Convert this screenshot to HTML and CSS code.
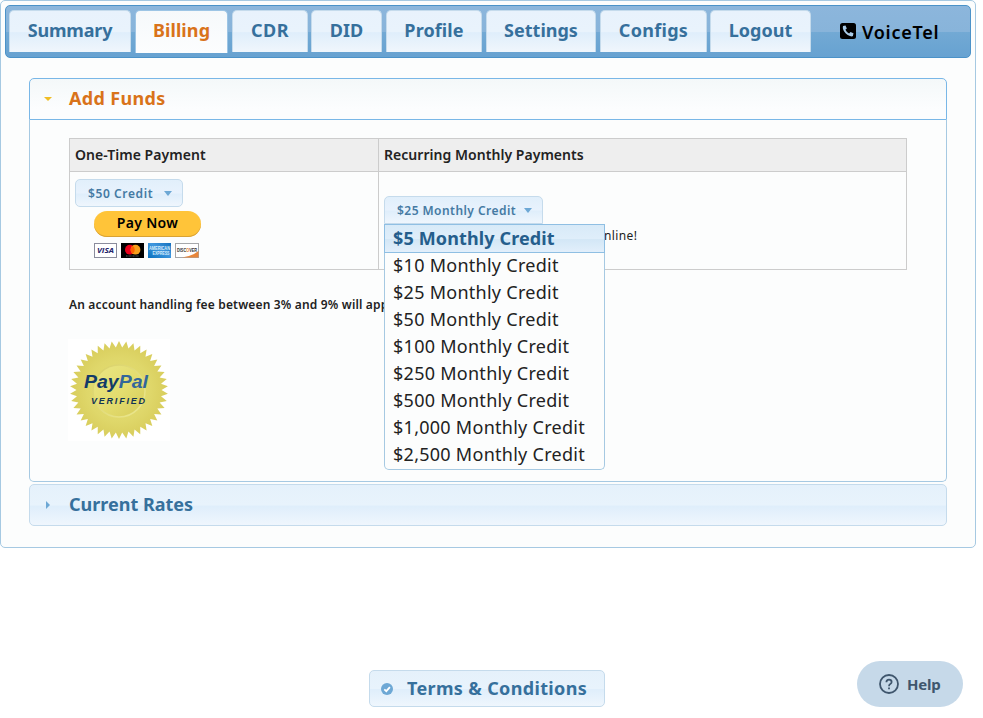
FILE: index.html
```html
<!DOCTYPE html>
<html lang="en">
<head>
<meta charset="utf-8">
<title>VoiceTel - Billing</title>
<link rel="stylesheet" href="styles.css">
</head>
<body>
<div class="tabs">
  <nav class="tab-bar">
    <a class="tab t-summary"><span>Summary</span></a>
    <a class="tab t-billing active"><span>Billing</span></a>
    <a class="tab t-cdr"><span>CDR</span></a>
    <a class="tab t-did"><span>DID</span></a>
    <a class="tab t-profile"><span>Profile</span></a>
    <a class="tab t-settings"><span>Settings</span></a>
    <a class="tab t-configs"><span>Configs</span></a>
    <a class="tab t-logout"><span>Logout</span></a>
    <div class="brand">
      <svg width="16" height="16" viewBox="0 0 16 16"><rect width="16" height="16" rx="2.5" fill="#000"/><path d="M3 3.1 5.5 2.5 6.8 5.5 5.4 6.8Q6.5 9.2 9.1 10.5L10.5 9 13.5 10.3 12.9 13Q11.7 14.2 7.7 12 3.5 9.2 2.8 5Z" fill="#a9cbe7"/></svg>
      <span>VoiceTel</span>
    </div>
  </nav>
  <main class="accordion">
    <h3 class="head open"><i class="caret caret-open"></i><span class="add-funds">Add Funds</span></h3>
    <section class="panel">
      <div class="payments">
        <div class="cell th"><span class="th-one">One-Time Payment</span></div>
        <div class="cell th"><span class="th-rec">Recurring Monthly Payments</span></div>
        <div class="cell one-time">
          <div class="select"><span>$50 Credit</span><i class="arrow"></i></div>
          <div class="pay">
            <button class="pay-now"><span>Pay Now</span></button>
            <div class="cards">
              <svg width="23" height="15" viewBox="0 0 23 15"><rect x=".5" y=".5" width="22" height="14" fill="#fff" stroke="#8a8c9c"/><text x="3" y="10.4" class="visa" textLength="17" lengthAdjust="spacingAndGlyphs">VISA</text></svg>
              <svg width="23" height="15" viewBox="0 0 23 15"><rect width="23" height="15" fill="#000"/><circle cx="8.9" cy="6.7" r="4.9" fill="#eb001b"/><circle cx="14.5" cy="6.7" r="4.9" fill="#f79e1b"/><path d="M11.7 2.7a4.9 4.9 0 0 1 0 8 4.9 4.9 0 0 1 0-8Z" fill="#ff5f00"/><path d="M5 13h13" stroke="#777" stroke-width=".8" stroke-dasharray="1 .4"/></svg>
              <svg width="23" height="15" viewBox="0 0 23 15"><defs><linearGradient id="amex" x1="0" y1="1" x2="1" y2="0"><stop offset="0" stop-color="#0870be"/><stop offset=".55" stop-color="#4097de"/><stop offset="1" stop-color="#1470bd"/></linearGradient></defs><rect width="23" height="15" fill="url(#amex)"/><text x="1" y="6.8" class="amex" textLength="21" lengthAdjust="spacingAndGlyphs">AMERICAN</text><text x="4.5" y="11.8" class="amex" textLength="17" lengthAdjust="spacingAndGlyphs">EXPRESS</text></svg>
              <svg width="24" height="15" viewBox="0 0 24 15"><rect x=".5" y=".5" width="23" height="14" fill="#fff" stroke="#a5a7aa"/><path d="M23.5 8v6.5H7Q17 13.3 23.5 8Z" fill="#e8863a"/><text x="2" y="8.5" class="disc" textLength="20" lengthAdjust="spacingAndGlyphs">DISC<tspan fill="#ee8130">O</tspan>VER</text></svg>
            </div>
          </div>
        </div>
        <div class="cell recurring">
          <div class="select-wrap">
            <div class="select select-open"><span>$25 Monthly Credit</span><i class="arrow"></i></div>
            <ul class="menu">
              <li class="hover"><span>$5 Monthly Credit</span></li>
              <li>$10 Monthly Credit</li>
              <li>$25 Monthly Credit</li>
              <li>$50 Monthly Credit</li>
              <li>$100 Monthly Credit</li>
              <li>$250 Monthly Credit</li>
              <li>$500 Monthly Credit</li>
              <li>$1,000 Monthly Credit</li>
              <li>$2,500 Monthly Credit</li>
            </ul>
          </div>
          <p class="online">nline!</p>
        </div>
      </div>
      <p class="fee">An account handling fee between 3% and 9% will app</p>
      <svg class="seal" width="102" height="102" viewBox="-51 -51 102 102">
        <defs>
          <radialGradient id="gold"><stop offset="0" stop-color="#e6e074"/><stop offset=".65" stop-color="#dfd76a"/><stop offset="1" stop-color="#d8cd5c"/></radialGradient>
          <linearGradient id="disc" x1="0" y1="0" x2="1" y2="1"><stop offset="0" stop-color="#eae684"/><stop offset=".55" stop-color="#e3dc6e"/><stop offset="1" stop-color="#d6cb59"/></linearGradient>
          <linearGradient id="rim" x1="0" y1="0" x2="1" y2="1"><stop offset="0" stop-color="#d8d067"/><stop offset="1" stop-color="#ece890"/></linearGradient>
        </defs>
        <rect x="-51" y="-51" width="102" height="102" fill="#fff"/>
        <polygon id="burst" fill="url(#gold)"/>
        <circle cy="1" r="26" fill="url(#disc)" stroke="url(#rim)" stroke-width="1.5"/>
        <text x="-35" y="-2.5" class="pp" textLength="64" lengthAdjust="spacingAndGlyphs"><tspan fill="#123b68">Pay</tspan><tspan fill="#32669b">Pal</tspan></text>
        <text x="-28" y="14" class="ver" textLength="54">VERIFIED</text>
      </svg>
    </section>
    <h3 class="head closed"><i class="caret caret-closed"></i><span class="rates">Current Rates</span></h3>
  </main>
</div>
<a class="terms">
  <svg width="12" height="12" viewBox="0 0 12 12"><circle cx="6" cy="6" r="6" fill="#6da8d5"/><path d="m3.3 6.4 2 1.8 3.6-4" fill="none" stroke="#fff" stroke-width="1.8"/></svg>
  <span>Terms &amp; Conditions</span>
</a>
<a class="help">
  <svg width="20" height="20" viewBox="0 0 20 20" fill="none" stroke="#3f566d" stroke-width="1.8"><circle cx="10" cy="10" r="9"/><path d="M7.4 8.2Q7.4 5.6 10 5.6T12.6 8Q12.6 9.3 11.3 10 10 10.7 10 12.2"/><path d="M10 13.4v1.9"/></svg>
  <span>Help</span>
</a>
<script src="seal.js"></script>
</body>
</html>
```
FILE: styles.css
```css
* { box-sizing: border-box; }
body { margin: 0; height: 718px; position: relative; overflow: hidden; background: #fff; color: #222; font-family: "Noto Sans", "Open Sans", sans-serif; }
p, h3, ul { margin: 0; padding: 0; }
svg { display: block; flex: none; }
span { white-space: nowrap; }
.tabs { width: 976px; height: 548px; border: 1px solid #a6c9e2; border-radius: 5px; padding: 4px; background: #fcfdfd; }
.tab-bar { display: flex; align-items: flex-start; width: 966px; height: 53px; padding: 4px 3px 0; border: 1px solid #4b92c8; border-radius: 5px; background: linear-gradient(#8cb6dc 0, #88b4da 50%, #72a9d4 52%, #67a2d1 100%); }
.tab { display: flex; justify-content: center; height: 42px; border: 1px solid #c5dbec; border-bottom: 0; border-radius: 5px 5px 0 0; background: linear-gradient(#e8f2fc 0, #e9f3fc 50%, #dfeefb 53%, #f0f6fc 100%); color: #36709c; font-size: 18px; font-weight: 700; line-height: 39px; }
.active { height: 43px; border-color: #9dc5e5; background: linear-gradient(#f6f9fb, #fcfdfe); color: #d9731a; }
.t-summary { width: 122px; margin-right: 4px; letter-spacing: -.2px; }
.t-billing { width: 93px; margin-right: 4px; letter-spacing: .1px; }
.t-cdr { width: 76px; margin-right: 3px; letter-spacing: .5px; }
.t-did { width: 71px; margin-right: 4px; letter-spacing: .1px; }
.t-profile { width: 96px; margin-right: 4px; letter-spacing: .1px; }
.t-settings { width: 110px; margin-right: 4px; }
.t-configs { width: 107px; margin-right: 3px; letter-spacing: .3px; }
.t-logout { width: 101px; }
.brand { display: flex; align-items: center; gap: 6px; height: 42px; margin-left: 29px; color: #000; font-size: 18px; font-weight: 600; letter-spacing: .75px; }
.brand span { margin-top: 1px; }
.accordion { width: 918px; margin: 20px 0 0 24px; }
.head { display: flex; align-items: center; height: 42px; padding-left: 12px; border: 1px solid #c5dbec; border-radius: 5px; font-size: 18px; font-weight: 700; line-height: 38px; }
.head span { padding-bottom: 3px; }
.add-funds { letter-spacing: .35px; }
.open { border-color: #79b7e7; border-radius: 5px 5px 0 0; background: linear-gradient(#f4f8f9, #fcfdfe 75%); color: #d9731a; }
.closed { margin-top: 2px; background: linear-gradient(#e5f1fb 0, #e8f3fc 50%, #dfeefb 53%, #eff6fd 100%); color: #36709c; }
.caret { width: 12px; height: 8px; margin-right: 15px; }
.caret::before { content: ""; display: block; width: 0; height: 0; }
.caret-open::before { margin: 2px 0 0 2px; border: 4px solid transparent; border-top-color: #f0bd24; border-bottom: 0; }
.caret-closed::before { margin-left: 4px; border: 4px solid transparent; border-left-color: #6da8d5; border-right: 0; }
.panel { height: 362px; padding: 18px 39px 0; border: 1px solid #a6c9e2; border-top: 0; border-radius: 0 0 5px 5px; }
.payments { display: grid; grid-template: 33px 98px / 309px 528px; width: 838px; height: 132px; border: 1px solid #ccc; border-width: 1px 0 0 1px; }
.cell { border: 1px solid #ccc; border-width: 0 1px 1px 0; }
.th { padding-left: 5px; background: #eee; font-size: 14px; font-weight: 600; line-height: 32px; letter-spacing: .04px; }
.one-time { padding: 7px 0 0 5px; }
.recurring { display: flex; padding: 24px 0 0 5px; }
.select { display: flex; align-items: center; justify-content: space-between; width: 108px; height: 28px; padding: 0 10px 0 12px; border: 1px solid #c5dbec; border-radius: 5px; background: linear-gradient(#e1effb 0, #e8f2fd 50%, #dfeefb 54%, #eff6fd 100%); color: #457aa3; font-size: 12px; font-weight: 600; letter-spacing: .6px; }
.arrow { border: 4px solid transparent; border-top: 5px solid #6da8d5; border-bottom: 0; }
.select-open { width: 159px; border-radius: 5px 5px 0 0; letter-spacing: .45px; }
.select-wrap { position: relative; }
.menu { position: absolute; z-index: 2; left: 0; top: 28px; width: 221px; height: 246px; border: 1px solid #a6c9e2; border-top: 0; border-radius: 0 0 5px 5px; background: #fcfdfd; list-style: none; font-size: 18px; font-weight: 400; letter-spacing: .27px; }
.menu li { height: 27px; padding-left: 8px; line-height: 24px; white-space: nowrap; }
.menu .hover { height: 29px; margin: 0 -1px; padding-left: 8px; border: 1px solid #8fbfe3; background: linear-gradient(#d8eaf8 0, #dfeefa 50%, #d3e7f6 54%, #e2effb 100%); color: #255e8c; font-weight: 700; line-height: 26px; letter-spacing: .13px; }
.online { margin: 31px 0 0 61px; font-size: 12px; line-height: 17px; letter-spacing: .4px; }
.pay { width: 107px; margin: 4px 0 0 19px; }
.pay-now { display: block; width: 107px; height: 26px; margin: 0; padding: 0; border: 0; border-radius: 13px; background: #ffc439; box-shadow: inset 0 -1px #d8a235; font: 600 14px/24px "Noto Sans", sans-serif; letter-spacing: .3px; color: #000; }
.pay-now span { display: block; height: 26px; }
.cards { display: flex; gap: 4px; margin-top: 6px; }
.visa { font: italic 700 7.5px "Open Sans"; fill: #25256b; }
.amex { font: 700 4.8px "Liberation Sans"; fill: #d9edfb; }
.disc { font: 700 5px "Liberation Sans"; fill: #333; }
.fee { margin-top: 26px; font-size: 12px; font-weight: 600; line-height: 17px; letter-spacing: .17px; white-space: nowrap; }
.seal { margin-top: 26px; margin-left: -1px; }
.pp { font: italic 700 19px "Liberation Sans"; stroke-width: .4px; }
.ver { font: italic 700 9px "Liberation Sans"; fill: #123454; }
.terms { display: flex; align-items: center; width: 236px; height: 37px; margin: 122px 0 0 369px; padding-left: 11px; border: 1px solid #c5dbec; border-radius: 5px; background: linear-gradient(#e5f1fb 0, #e8f3fc 50%, #dfeefb 53%, #eff6fd 100%); color: #36709c; font-size: 18px; font-weight: 700; letter-spacing: .35px; }
.terms span { margin: -2px 0 0 14px; }
.help { position: absolute; right: 20px; bottom: 11px; display: flex; align-items: center; width: 106px; height: 46px; padding-left: 22px; border-radius: 23px; background: #c6d9e9; color: #3f566d; font-size: 15px; font-weight: 700; letter-spacing: -.2px; }
.help span { margin-left: 8px; }
```
FILE: seal.js
```js
// Serrated edge of the verification seal
const points = [];
const spikes = 42;
for (let i = 0; i < spikes * 2; i++) {
  const radius = i % 2 ? 42.5 : 49;
  const angle = i * Math.PI / spikes;
  points.push((radius * Math.sin(angle)).toFixed(2) + "," + (-radius * Math.cos(angle)).toFixed(2));
}
document.getElementById("burst").setAttribute("points", points.join(" "));
```
